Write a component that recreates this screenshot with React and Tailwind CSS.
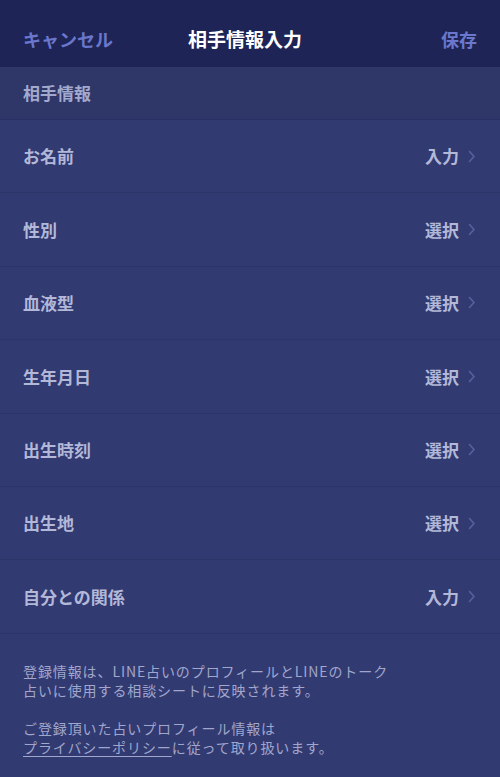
import React from "react";

const rows = [
  ["お名前", "入力"],
  ["性別", "選択"],
  ["血液型", "選択"],
  ["生年月日", "選択"],
  ["出生時刻", "選択"],
  ["出生地", "選択"],
  ["自分との関係", "入力"],
];

function Chevron() {
  return (
    <svg width="8" height="13" viewBox="0 0 8 13" className="ml-[9px]">
      <path d="M1.5 1.5 L6 6.5 L1.5 11.5" fill="none" stroke="#59619e" strokeWidth="1.6" strokeLinecap="round" strokeLinejoin="round" />
    </svg>
  );
}

export default function App() {
  return (
    <div
      className="w-[500px] h-[777px] bg-[#323a72] overflow-hidden"
      style={{ fontFamily: '"Noto Sans CJK JP", "Noto Sans", sans-serif' }}
    >
      <div className="h-[67px] bg-[#1e2456] flex items-center justify-between px-[23px] pt-[12px] relative">
        <span className="text-[18px] font-semibold text-[#6b77cc]">キャンセル</span>
        <span className="absolute left-0 right-[10px] text-center text-[19px] font-bold text-white pointer-events-none pt-[12px] top-0 h-full flex items-center justify-center">相手情報入力</span>
        <span className="text-[18px] font-semibold text-[#6b77cc]">保存</span>
      </div>
      <div className="h-[53px] bg-[#2f3668] flex items-center px-[23px] border-b border-[#2a3065]">
        <span className="text-[17px] font-semibold text-[#a3a9cc]">相手情報</span>
      </div>
      {rows.map(([label, value]) => (
        <div
          key={label}
          className="h-[73.4px] box-border border-b border-[#2d3468] flex items-center justify-between pl-[23px] pr-[24px]"
        >
          <span className="text-[17px] font-semibold text-[#b3b8d8]">{label}</span>
          <span className="flex items-center">
            <span className="text-[17px] font-semibold text-[#b3b8d8]">{value}</span>
            <Chevron />
          </span>
        </div>
      ))}
      <div className="px-[23px] pt-[28px] text-[14px] tracking-[0.9px] leading-[19px] text-[#a0a6cc]">
        <p>登録情報は、LINE占いのプロフィールとLINEのトーク</p>
        <p>占いに使用する相談シートに反映されます。</p>
        <p className="mt-[19px]">ご登録頂いた占いプロフィール情報は</p>
        <p>
          <span className="underline underline-offset-[3px]">プライバシーポリシー</span>に従って取り扱います。
        </p>
      </div>
    </div>
  );
}
